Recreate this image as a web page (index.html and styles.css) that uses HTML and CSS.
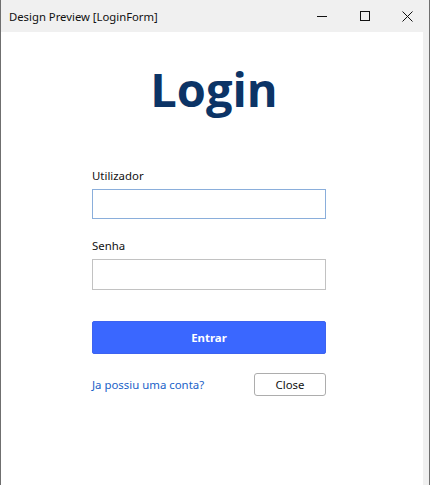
FILE: index.html
```html
<!DOCTYPE html>
<html>
<head>
<meta charset="utf-8">
<link rel="stylesheet" href="styles.css">
</head>
<body>
<div class="window">
  <div class="titlebar">
    <span class="title">Design Preview [LoginForm]</span>
    <div class="controls">
      <span class="ctl"><svg width="10" height="10" viewBox="0 0 10 10"><path d="M0 5.5h10" stroke="#111" stroke-width="1"/></svg></span>
      <span class="ctl"><svg width="10" height="10" viewBox="0 0 10 10"><rect x="0.5" y="0.5" width="9" height="9" fill="none" stroke="#111" stroke-width="1"/></svg></span>
      <span class="ctl"><svg width="11" height="11" viewBox="0 0 11 11"><path d="M0.5 0.5L10.5 10.5M10.5 0.5L0.5 10.5" stroke="#111" stroke-width="1"/></svg></span>
    </div>
  </div>
  <div class="body">
    <div class="client">
      <h1 class="heading">Login</h1>
      <form class="form">
        <label class="label">Utilizador</label>
        <div class="input focused"></div>
        <label class="label second">Senha</label>
        <div class="input"></div>
        <button type="button" class="primary">Entrar</button>
        <div class="footer">
          <a class="link">Ja possiu uma conta?</a>
          <button type="button" class="close">Close</button>
        </div>
      </form>
    </div>
    <div class="edge"></div>
  </div>
</div>
</body>
</html>
```
FILE: styles.css
```css
* { box-sizing: border-box; }
html, body { margin: 0; padding: 0; }
body {
  width: 430px;
  height: 485px;
  overflow: hidden;
  font-family: "Noto Sans", "Open Sans", sans-serif;
  background: #ffffff;
}
.window {
  width: 430px;
  height: 485px;
  border-left: 1px solid #6f6f6f;
  border-right: 1px solid #6f6f6f;
  display: flex;
  flex-direction: column;
}
.titlebar {
  height: 32px;
  background: #f0f0f0;
  display: flex;
  align-items: center;
  justify-content: space-between;
  padding-left: 8px;
  flex-shrink: 0;
}
.title {
  font-size: 11.3px;
  color: #111;
}
.controls {
  display: flex;
  height: 100%;
}
.ctl {
  width: 43px;
  height: 100%;
  display: flex;
  align-items: center;
  justify-content: center;
}
.body {
  flex: 1;
  display: flex;
}
.client {
  flex: 1;
  background: #ffffff;
  padding-left: 91px;
}
.edge {
  width: 6px;
  background: #f0f0f0;
}
.heading {
  margin: 27px 0 0 0;
  width: 244px;
  text-align: center;
  font-family: "Open Sans", sans-serif;
  font-weight: 700;
  font-size: 47px;
  line-height: 60px;
  color: #0c3466;
}
.form {
  width: 234px;
  display: flex;
  flex-direction: column;
  margin-top: 49px;
}
.label {
  font-size: 11.4px;
  line-height: 16px;
  color: #111;
}
.label.second { margin-top: 19px; }
.input {
  margin-top: 5px;
  height: 31px;
  border: 1px solid #c2c2c2;
  background: #fff;
}
.input.focused { height: 30px; border-color: #8aaedb; }
.primary {
  margin-top: 31px;
  height: 33px;
  border: 1px solid #3d63f0;
  border-radius: 2px;
  background: #3a67ff;
  color: #fff;
  font-family: "Noto Sans", sans-serif;
  font-weight: 700;
  font-size: 11.4px;
  padding: 0;
}
.footer {
  margin-top: 19px;
  display: flex;
  justify-content: space-between;
  align-items: center;
}
.link {
  font-size: 11.4px;
  color: #1a62c8;
}
.close {
  width: 72px;
  height: 23px;
  border: 1px solid #adadad;
  border-radius: 3px;
  background: #fff;
  font-family: "Noto Sans", sans-serif;
  font-size: 11.4px;
  color: #111;
  padding: 0;
}
```
